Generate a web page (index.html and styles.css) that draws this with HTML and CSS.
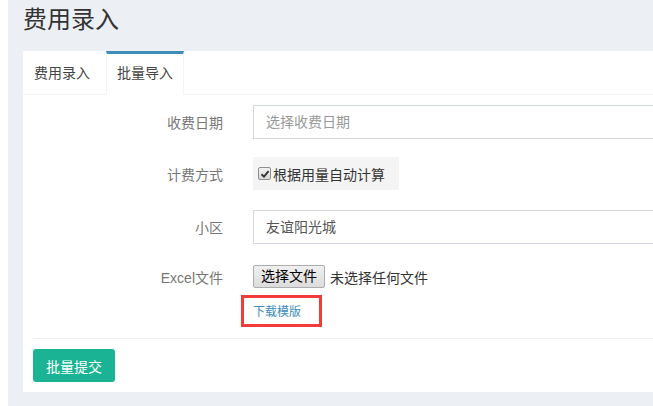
FILE: index.html
```html
<!DOCTYPE html>
<html lang="zh-CN">
<head>
<meta charset="utf-8">
<title>费用录入</title>
<link rel="stylesheet" href="styles.css">
</head>
<body>
<div class="content">
  <h1 class="page-title">费用录入</h1>
  <div class="panel">
    <ul class="tabs">
      <li class="tab">费用录入</li>
      <li class="tab active">批量导入</li>
    </ul>
    <div class="form">
      <div class="row row-date">
        <label class="label">收费日期</label>
        <div class="control"><div class="input placeholder">选择收费日期</div></div>
      </div>
      <div class="row row-check">
        <label class="label">计费方式</label>
        <div class="control">
          <div class="check-box">
            <span class="checkbox"><svg width="10" height="10" viewBox="0 0 10 10"><path d="M1.5 5.2 L4 7.6 L8.6 2.2" fill="none" stroke="#333" stroke-width="1.9"/></svg></span>
            <span class="check-text">根据用量自动计算</span>
          </div>
        </div>
      </div>
      <div class="row row-area">
        <label class="label">小区</label>
        <div class="control"><div class="input value">友谊阳光城</div></div>
      </div>
      <div class="row row-file">
        <label class="label">Excel文件</label>
        <div class="control file-control">
          <span class="file-btn">选择文件</span>
          <span class="file-text">未选择任何文件</span>
        </div>
      </div>
      <div class="download-row">
        <div class="highlight"><a class="download" href="#">下载模版</a></div>
      </div>
    </div>
    <div class="footer">
      <button class="submit" type="button">批量提交</button>
    </div>
  </div>
</div>
</body>
</html>
```
FILE: styles.css
```css
html, body {
  margin: 0;
  padding: 0;
  background: #fff;
  font-family: "Liberation Sans", "Noto Sans CJK SC", sans-serif;
  font-size: 14px;
  color: #333;
}
.content {
  margin-left: 8px;
  background: #ecf0f5;
  padding: 0 0 14px 15px;
  min-height: 392px;
}
.page-title {
  margin: 0;
  height: 51px;
  line-height: 40px;
  font-size: 24px;
  font-weight: normal;
  color: #333;
}
.panel {
  background: #fff;
}
.tabs {
  list-style: none;
  margin: 0;
  padding: 0;
  display: flex;
  height: 43px;
  border-bottom: 1px solid #f4f4f4;
}
.tab {
  padding: 0 10px;
  margin-right: 5px;
  border: 1px solid transparent;
  border-top: 3px solid transparent;
  line-height: 38px;
  color: #444;
  font-size: 14px;
}
.tab.active {
  border-color: #f4f4f4;
  border-top-color: #3c8dbc;
  background: #fff;
  height: 41px;
  margin-bottom: -1px;
  border-bottom: none;
}
.form {
  padding: 10px 0 0 10px;
}
.row {
  display: flex;
  align-items: center;
}
.label {
  width: 190px;
  padding-right: 15px;
  text-align: right;
  color: #777;
  flex-shrink: 0;
}
.control {
  margin-left: 15px;
  flex: 1;
}
.input {
  height: 32px;
  border: 1px solid #d2d6de;
  border-right: none;
  padding-left: 12px;
  line-height: 32px;
}
.placeholder { color: #999; }
.value { color: #555; }
.row-date { margin-bottom: 18px; }
.row-check { margin-bottom: 20px; }
.row-area { margin-bottom: 21px; }
.check-box {
  display: inline-flex;
  align-items: center;
  background: #f4f4f4;
  width: 146px;
  height: 33px;
  padding-left: 5px;
  box-sizing: border-box;
}
.checkbox {
  width: 11px;
  height: 11px;
  border: 1px solid #8f8f8f;
  border-radius: 2px;
  background: linear-gradient(#f2f2f2, #d8d8d8);
  display: inline-flex;
  align-items: center;
  justify-content: center;
  margin-right: 2px;
}
.check-text { color: #333; }
.file-control {
  display: flex;
  align-items: center;
}
.file-btn {
  display: inline-block;
  height: 21px;
  line-height: 21px;
  padding: 0 7px;
  border: 1px solid #adadad;
  border-radius: 2px;
  background: linear-gradient(#f0f0f0, #dcdcdc);
  color: #000;
}
.file-text {
  margin-left: 5px;
  color: #333;
}
.download-row {
  padding-left: 208px;
  margin-top: 7px;
  padding-bottom: 11px;
  border-bottom: 1px solid #eee;
}
.highlight {
  display: inline-block;
  border: 3px solid #f43a3a;
  width: 66px;
  height: 26px;
  box-sizing: content-box;
  padding-left: 9px;
  line-height: 26px;
}
.download {
  font-size: 12px;
  color: #3c8dbc;
  text-decoration: none;
}
.footer {
  padding: 10px 0 10px 10px;
}
.submit {
  display: block;
  width: 82px;
  height: 33px;
  background: #1ab394;
  border: none;
  border-radius: 3px;
  color: #fff;
  font-size: 14px;
  font-family: "Liberation Sans", "Noto Sans CJK SC", sans-serif;
  padding: 0;
}
```
